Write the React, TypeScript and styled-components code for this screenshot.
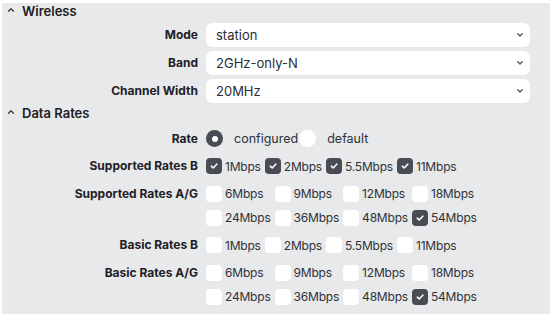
import React from "react";
import styled, { createGlobalStyle } from "styled-components";

const GlobalStyle = createGlobalStyle`
  html, body {
    margin: 0;
    padding: 0;
    background: #ffffff;
  }
  body {
    font-family: Inter, "Noto Sans", "Liberation Sans", sans-serif;
    color: #22252b;
  }
`;

interface Rate {
  label: string;
  checked?: boolean;
}

const selects = [
  { label: "Mode", value: "station" },
  { label: "Band", value: "2GHz-only-N" },
  { label: "Channel Width", value: "20MHz" },
];

const bRates = (checked: boolean): Rate[] =>
  ["1Mbps", "2Mbps", "5.5Mbps", "11Mbps"].map((label) => ({ label, checked }));

const agRates = (): Rate[] =>
  ["6Mbps", "9Mbps", "12Mbps", "18Mbps", "24Mbps", "36Mbps", "48Mbps", "54Mbps"].map(
    (label) => ({ label, checked: label === "54Mbps" })
  );

const rateFields = [
  { label: "Supported Rates B", rates: bRates(true) },
  { label: "Supported Rates A/G", rates: agRates() },
  { label: "Basic Rates B", rates: bRates(false) },
  { label: "Basic Rates A/G", rates: agRates() },
];

const CaretUp = () => (
  <svg width="8" height="6" viewBox="0 0 8 6">
    <path d="M1.5 4.2 L4 1.8 L6.5 4.2" fill="none" stroke="#3a3d44" strokeWidth="1.3" strokeLinecap="round" strokeLinejoin="round" />
  </svg>
);

const ChevronDown = () => (
  <svg width="8" height="6" viewBox="0 0 8 6">
    <path d="M1.8 1.8 L4 4 L6.2 1.8" fill="none" stroke="#5b5e66" strokeWidth="1.5" strokeLinecap="round" strokeLinejoin="round" />
  </svg>
);

const Check = () => (
  <svg width="10" height="10" viewBox="0 0 10 10">
    <path d="M2.3 5.2 L4.2 7 L7.8 3.2" fill="none" stroke="#ffffff" strokeWidth="1.6" strokeLinecap="round" strokeLinejoin="round" />
  </svg>
);

const App: React.FC = () => {
  return (
    <>
      <GlobalStyle />
      <Panel>
        <SectionHeader>
          <CaretUp />
          <span>Wireless</span>
        </SectionHeader>
        <SelectList>
          {selects.map((s) => (
            <FieldRow key={s.label}>
              <Label>{s.label}</Label>
              <SelectBox>
                <span>{s.value}</span>
                <ChevronDown />
              </SelectBox>
            </FieldRow>
          ))}
        </SelectList>

        <SectionHeader>
          <CaretUp />
          <span>Data Rates</span>
        </SectionHeader>
        <RateList>
          <FieldRow>
            <Label>Rate</Label>
            <RadioGroup>
              <Option>
                <Radio checked />
                <OptionText>configured</OptionText>
              </Option>
              <Option>
                <Radio />
                <OptionText>default</OptionText>
              </Option>
            </RadioGroup>
          </FieldRow>
          {rateFields.map((f) => (
            <FieldRow key={f.label} align="start">
              <Label>{f.label}</Label>
              <CheckGrid>
                {f.rates.map((r) => (
                  <CheckItem key={r.label}>
                    <Box checked={r.checked}>{r.checked && <Check />}</Box>
                    <ItemText>{r.label}</ItemText>
                  </CheckItem>
                ))}
              </CheckGrid>
            </FieldRow>
          ))}
        </RateList>
      </Panel>
    </>
  );
};

const Panel = styled.div`
  margin: 3px 0 4px 2px;
  height: 311px;
  box-sizing: border-box;
  background: #e8e9eb;
  display: flex;
  flex-direction: column;
  padding-right: 20px;
`;

const SectionHeader = styled.div`
  display: flex;
  align-items: center;
  height: 15px;
  gap: 7px;
  padding-left: 5px;
  font-size: 13px;
  font-weight: 600;
  color: #1d2026;

  svg {
    margin-top: -1px;
  }
`;

const SelectList = styled.div`
  display: flex;
  flex-direction: column;
  gap: 4px;
  margin: 5px 0 2px;
`;

const RateList = styled.div`
  display: flex;
  flex-direction: column;
  gap: 7.5px;
  margin-top: 8.5px;
`;

const FieldRow = styled.div<{ align?: "start" | "center" }>`
  display: grid;
  grid-template-columns: 196px 1fr;
  column-gap: 8px;
  align-items: ${({ align }) => (align === "start" ? "start" : "center")};
`;

const Label = styled.div`
  text-align: right;
  font-size: 12px;
  font-weight: 700;
  color: #1d2026;
  line-height: 20px;
  white-space: nowrap;
`;

const SelectBox = styled.div`
  height: 24px;
  background: #ffffff;
  border-radius: 6px;
  display: flex;
  align-items: center;
  justify-content: space-between;
  padding: 0 6px 0 10px;
  font-size: 13px;
  color: #2a2d33;
`;

const RadioGroup = styled.div`
  display: flex;
  align-items: center;
  height: 20px;
`;

const Option = styled.div`
  display: flex;
  align-items: center;
`;

const Radio = styled.span<{ checked?: boolean }>`
  width: 17px;
  height: 17px;
  border-radius: 50%;
  background: ${({ checked }) => (checked ? "#494c54" : "#ffffff")};
  display: flex;
  align-items: center;
  justify-content: center;

  &::after {
    content: "";
    width: 6px;
    height: 6px;
    border-radius: 50%;
    background: #ffffff;
    display: ${({ checked }) => (checked ? "block" : "none")};
  }
`;

const OptionText = styled.span`
  font-size: 12.5px;
  color: #2f3238;
  margin: 0 0 0 11px;
  padding-right: 1px;
`;

const CheckGrid = styled.div`
  display: grid;
  grid-template-columns: repeat(4, auto);
  justify-content: start;
  column-gap: 4px;
  row-gap: 4px;
`;

const CheckItem = styled.div`
  display: flex;
  align-items: center;
  height: 20px;
  gap: 3px;
`;

const Box = styled.span<{ checked?: boolean }>`
  width: 16px;
  height: 16px;
  border-radius: 4px;
  background: ${({ checked }) => (checked ? "#494c54" : "#ffffff")};
  display: flex;
  align-items: center;
  justify-content: center;
  flex-shrink: 0;
`;

const ItemText = styled.span`
  font-size: 12px;
  color: #2f3238;
  letter-spacing: -0.2px;
`;

export default App;
